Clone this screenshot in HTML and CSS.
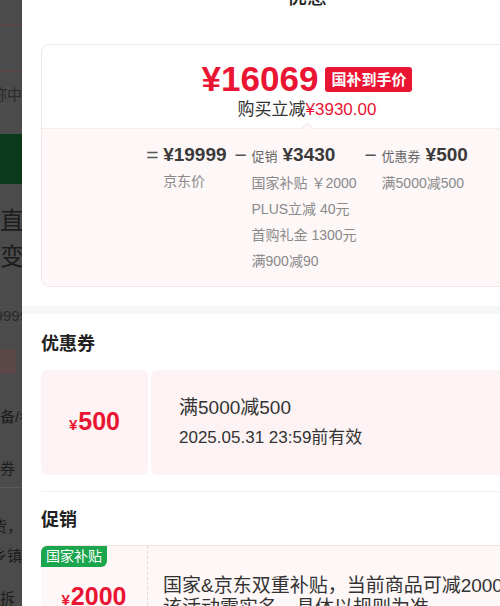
FILE: index.html
```html
<!DOCTYPE html>
<html lang="zh-CN">
<head>
    <meta charset="UTF-8">
    <meta name="viewport" content="width=device-width, initial-scale=1.0">
    <title>优惠</title>
    <link rel="stylesheet" href="styles.css">
</head>
<body>
    <div class="page">
        <!-- dimmed product page behind the sheet -->
        <div class="backdrop">
            <div class="bd-rule bd-rule-1"></div>
            <div class="bd-rule bd-rule-2"></div>
            <div class="bd-line bd-right bd-name">称中</div>
            <div class="bd-green"></div>
            <div class="bd-big bd-first">直降</div>
            <div class="bd-big">变</div>
            <div class="bd-line bd-right bd-price">¥19999</div>
            <div class="bd-tag"></div>
            <div class="bd-line bd-spec">备/参</div>
            <div class="bd-line bd-coupon">券</div>
            <div class="bd-sep"></div>
            <div class="bd-line bd-right bd-ship">现货，</div>
            <div class="bd-line bd-right bd-town">乡镇</div>
            <div class="bd-line bd-return">拆</div>
        </div>

        <div class="sheet">
            <h2 class="sheet-title">优惠</h2>

            <div class="sheet-body">
                <div class="price-card">
                    <div class="price-top">
                        <div class="price-main">
                            <span class="price-now">¥16069</span>
                            <span class="badge-red">国补到手价</span>
                        </div>
                        <div class="price-save">购买立减<em>¥3930.00</em></div>
                    </div>

                    <div class="price-calc">
                        <div class="calc-col">
                            <span class="calc-op">=</span>
                            <div>
                                <div class="calc-head">¥19999</div>
                                <div>京东价</div>
                            </div>
                        </div>
                        <div class="calc-col">
                            <span class="calc-op">−</span>
                            <div>
                                <div class="calc-head"><small>促销</small>¥3430</div>
                                <div>国家补贴 ￥2000</div>
                                <div>PLUS立减 40元</div>
                                <div>首购礼金 1300元</div>
                                <div>满900减90</div>
                            </div>
                        </div>
                        <div class="calc-col">
                            <span class="calc-op">−</span>
                            <div>
                                <div class="calc-head"><small>优惠券</small>¥500</div>
                                <div>满5000减500</div>
                            </div>
                        </div>
                    </div>
                </div>
            </div>

            <div class="band"></div>

            <div class="sheet-body">
                <section class="block">
                    <h3 class="block-title">优惠券</h3>
                    <div class="coupon">
                        <div class="coupon-value"><span class="yen">¥</span><span class="num">500</span></div>
                        <div class="coupon-info">
                            <div class="coupon-title">满5000减500</div>
                            <div class="coupon-date">2025.05.31 23:59前有效</div>
                        </div>
                    </div>
                </section>

                <section class="block promo-block">
                    <h3 class="block-title">促销</h3>
                    <div class="promo">
                        <span class="badge-green">国家补贴</span>
                        <div class="promo-value"><span class="yen">¥</span><span class="num">2000</span></div>
                        <div class="promo-info">国家&amp;京东双重补贴，当前商品可减2000元，<br>该活动需实名，具体以规则为准</div>
                    </div>
                </section>
            </div>
        </div>
    </div>
</body>
</html>
```

FILE: styles.css
```css
body {
    margin: 0;
    width: 500px;
    height: 606px;
    overflow: hidden;
    font-family: "Liberation Sans", "Noto Sans CJK SC", sans-serif;
    color: #333;
    background: #fff;
}
.page {
    display: flex;
    height: 606px;
}

/* backdrop */
.backdrop {
    width: 22px;
    flex-shrink: 0;
    background: #4b4b4b;
    overflow: hidden;
    display: flex;
    flex-direction: column;
    color: #1c1c1c;
    font-size: 15px;
}
.bd-rule {
    height: 2px;
    background: #574545;
    flex-shrink: 0;
}
.bd-rule-1 {
    margin-top: 24px;
}
.bd-rule-2 {
    margin-top: 44px;
}
.bd-line {
    line-height: 20px;
    height: 20px;
    white-space: nowrap;
    flex-shrink: 0;
}
.bd-right {
    display: flex;
    justify-content: flex-end;
}
.bd-name {
    margin-top: 13px;
    color: #2a2a2a;
}
.bd-green {
    height: 50px;
    margin-top: 29px;
    background: #0b3a1a;
    flex-shrink: 0;
}
.bd-big {
    font-size: 24px;
    line-height: 36px;
    height: 36px;
    white-space: nowrap;
    flex-shrink: 0;
}
.bd-first {
    margin-top: 19px;
}
.bd-price {
    margin-top: 31px;
    color: #2a2a2a;
    margin-right: -6px;
}
.bd-tag {
    width: 16px;
    height: 25px;
    margin-top: 23px;
    background: #5c4848;
    flex-shrink: 0;
}
.bd-spec {
    margin-top: 33px;
}
.bd-coupon {
    margin-top: 32px;
}
.bd-sep {
    height: 1px;
    margin-top: 8px;
    background: #5a5a5a;
    flex-shrink: 0;
}
.bd-ship {
    margin-top: 29px;
}
.bd-town {
    margin-top: 9px;
}
.bd-return {
    margin-top: 23px;
}

/* sheet */
.sheet {
    width: 570px;
    flex-shrink: 0;
    background: #fff;
}
.sheet-title {
    margin: -13px 0 37px;
    text-align: center;
    font-size: 20px;
    line-height: 20px;
    font-weight: 500;
    color: #222;
}
.sheet-body {
    padding: 0 19px;
}

.price-card {
    border: 1px solid #f2e6e8;
    border-radius: 8px;
    overflow: hidden;
}
.price-top {
    padding: 14px 0 7px;
    text-align: center;
}
.price-main {
    display: flex;
    justify-content: center;
    align-items: center;
    gap: 7px;
    height: 40px;
}
.price-now {
    color: #ea1532;
    font-size: 35px;
    font-weight: 700;
}
.badge-red {
    background: #ea1532;
    color: #fff;
    font-size: 15px;
    font-weight: 700;
    line-height: 25px;
    padding: 0 6px;
    border-radius: 3px;
}
.price-save {
    font-size: 17px;
    line-height: 22px;
    color: #333;
}
.price-save em {
    font-style: normal;
    color: #ea1532;
}

.price-calc {
    position: relative;
    display: flex;
    justify-content: center;
    padding: 13px 0 12px;
    background: #fdf7f7;
    border-top: 1px solid #f6ecec;
    font-size: 14px;
    line-height: 26px;
    color: #8a8a8a;
}
.price-calc::before {
    content: "";
    position: absolute;
    top: -5px;
    left: 50%;
    margin-left: -4px;
    width: 8px;
    height: 8px;
    background: #fdf7f7;
    border-top: 1px solid #f2e6e8;
    border-left: 1px solid #f2e6e8;
    transform: rotate(45deg);
}
.calc-col {
    display: flex;
}
.calc-col + .calc-col {
    margin-left: 8px;
}
.calc-op {
    width: 17px;
    font-size: 21px;
    color: #555;
}
.calc-head {
    font-size: 19px;
    font-weight: 700;
    color: #3a3a3a;
}
.calc-head small {
    font-size: 13px;
    font-weight: 400;
    color: #666;
    margin-right: 5px;
}

.band {
    height: 8px;
    margin-top: 19px;
    background: #f5f6f8;
}

.block-title {
    margin: 18px 0 14px;
    font-size: 18px;
    line-height: 24px;
    font-weight: 700;
    color: #222;
}

.coupon {
    display: flex;
    gap: 3px;
    height: 105px;
}
.coupon-value {
    width: 107px;
    display: flex;
    justify-content: center;
    align-items: baseline;
    padding-top: 37px;
    box-sizing: border-box;
    background: #fdf3f4;
    border-radius: 6px;
    color: #ea1532;
}
.yen {
    font-size: 15px;
    font-weight: 700;
    margin-right: 1px;
}
.num {
    font-size: 25px;
    font-weight: 700;
}
.coupon-info {
    flex: 1;
    display: flex;
    flex-direction: column;
    justify-content: center;
    padding-left: 28px;
    background: #fdf3f4;
    border-radius: 6px;
}
.coupon-title {
    font-size: 19px;
    line-height: 26px;
    color: #333;
}
.coupon-date {
    margin-top: 5px;
    font-size: 17px;
    line-height: 24px;
    color: #333;
}

.promo-block {
    margin-top: 16px;
    border-top: 1px solid #f0f0f0;
}
.promo-block .block-title {
    margin: 16px 0 13px;
}
.promo {
    position: relative;
    display: flex;
    height: 100px;
    background: #fdf7f7;
    border-top: 1px solid #f3e4e4;
    border-radius: 6px 6px 0 0;
}
.badge-green {
    position: absolute;
    top: 0;
    left: 0;
    padding: 0 5px;
    background: #1ba54c;
    color: #fff;
    font-size: 14px;
    line-height: 21px;
    border-radius: 6px 0 6px 0;
}
.promo-value {
    width: 107px;
    padding-top: 35px;
    box-sizing: border-box;
    display: flex;
    justify-content: center;
    align-items: baseline;
    border-right: 1px dashed #ead7d7;
    color: #ea1532;
    line-height: 30px;
}
.promo-info {
    padding: 29px 0 0 15px;
    font-size: 19px;
    line-height: 22px;
    color: #333;
}
```
